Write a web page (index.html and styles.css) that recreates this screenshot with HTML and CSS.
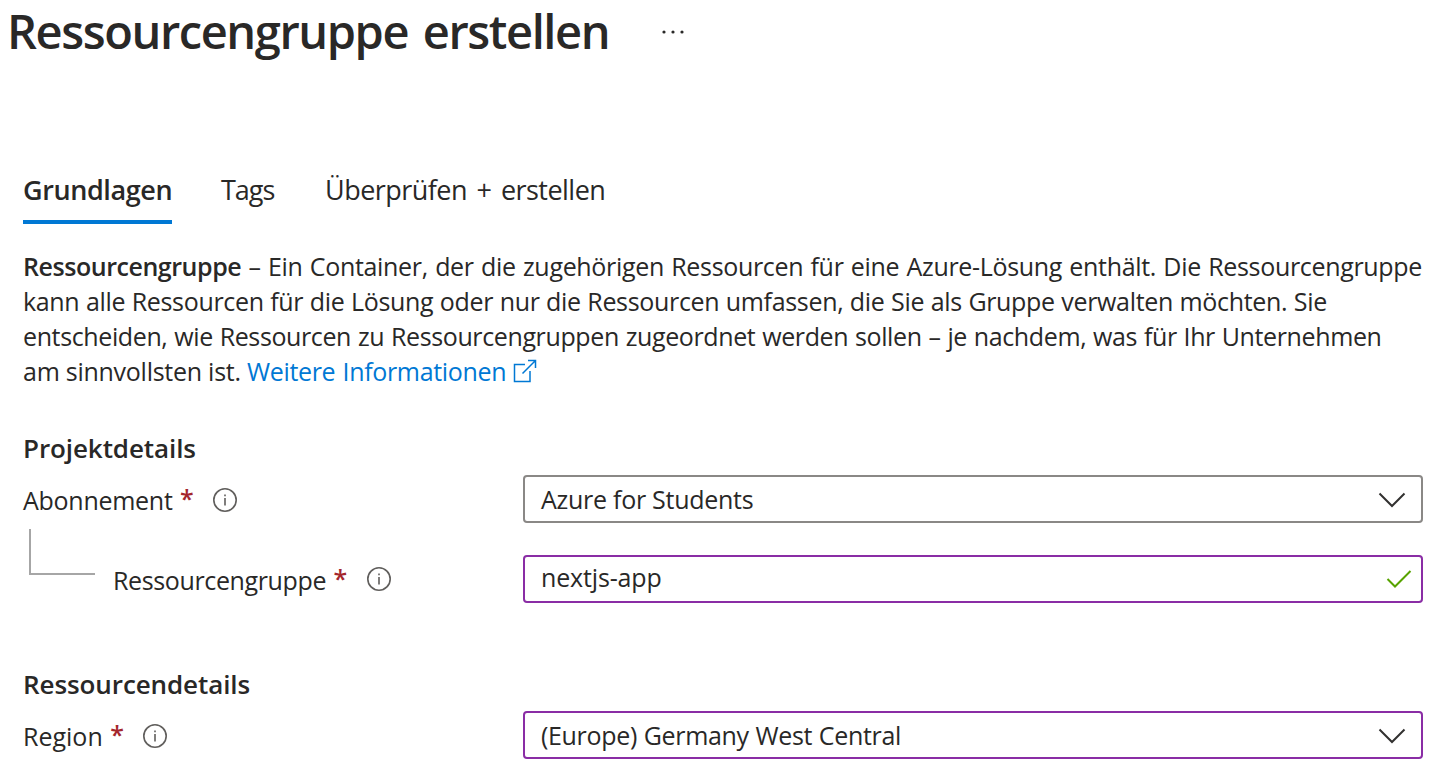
FILE: index.html
```html
<!DOCTYPE html>
<html lang="de">
<head>
<meta charset="utf-8">
<title>Ressourcengruppe erstellen</title>
<link rel="stylesheet" href="styles.css">
</head>
<body>
<header class="header">
  <h1 class="title">Ressourcengruppe erstellen</h1>
  <svg class="more" width="24" height="6" viewBox="0 0 24 6"><circle cx="3" cy="3" r="1.6"/><circle cx="12" cy="3" r="1.6"/><circle cx="21" cy="3" r="1.6"/></svg>
</header>
<nav class="tabs">
  <a class="tab tab-active">Grundlagen</a>
  <a class="tab tab-tags">Tags</a>
  <a class="tab tab-review">Überprüfen + erstellen</a>
</nav>
<main class="content">
  <p class="intro">
    <span class="line l1"><b>Ressourcengruppe</b> – Ein Container, der die zugehörigen Ressourcen für eine Azure-Lösung enthält. Die Ressourcengruppe</span>
    <span class="line l2">kann alle Ressourcen für die Lösung oder nur die Ressourcen umfassen, die Sie als Gruppe verwalten möchten. Sie</span>
    <span class="line l3">entscheiden, wie Ressourcen zu Ressourcengruppen zugeordnet werden sollen – je nachdem, was für Ihr Unternehmen</span>
    <span class="line l4">am sinnvollsten ist. <a class="link">Weitere Informationen<svg class="external" width="24" height="24" viewBox="0 0 24 24"><path d="M12 5.500H1.500V22.500H17V12M15 1.500H22.500V9M22.500 1.500L9.500 14.500"/></svg></a></span>
  </p>

  <h2 class="section">Projektdetails</h2>
  <div class="row">
    <div class="label"><span class="name n-sub">Abonnement</span><span class="star">*</span><svg class="info" width="26" height="26" viewBox="0 0 26 26"><circle cx="13" cy="13" r="11.200"/><path d="M13 11V18.500M13 7.500V9.300"/></svg></div>
    <div class="field"><span class="value v-sub">Azure for Students</span><svg class="chevron" width="28" height="16" viewBox="0 0 28 16"><path d="M1.500 1.500L14 14L26.500 1.500"/></svg></div>
  </div>
  <div class="row row-group">
    <div class="label"><span class="elbow"></span><span class="name n-group">Ressourcengruppe</span><span class="star">*</span><svg class="info info-group" width="26" height="26" viewBox="0 0 26 26"><circle cx="13" cy="13" r="11.200"/><path d="M13 11V18.500M13 7.500V9.300"/></svg></div>
    <div class="field field-edited"><span class="value v-group">nextjs-app</span><svg class="check" width="26" height="18" viewBox="0 0 26 18"><path d="M1.500 9L9 16.500L24.500 1"/></svg></div>
  </div>

  <h2 class="section section-resource">Ressourcendetails</h2>
  <div class="row">
    <div class="label"><span class="name n-region">Region</span><span class="star">*</span><svg class="info" width="26" height="26" viewBox="0 0 26 26"><circle cx="13" cy="13" r="11.200"/><path d="M13 11V18.500M13 7.500V9.300"/></svg></div>
    <div class="field field-edited"><span class="value v-region">(Europe) Germany West Central</span><svg class="chevron" width="28" height="16" viewBox="0 0 28 16"><path d="M1.500 1.500L14 14L26.500 1.500"/></svg></div>
  </div>
</main>
</body>
</html>
```
FILE: styles.css
```css
* { box-sizing: border-box; }
body {
  margin: 0;
  height: 778px;
  overflow: hidden;
  background: #fff;
  color: #292827;
  font: 25px/35px "Open Sans", "Noto Sans", sans-serif;
  letter-spacing: -0.27px;
  white-space: nowrap;
}
svg { fill: none; flex: none; }
.header { display: flex; align-items: center; height: 62px; padding-left: 7px; }
.title { margin: 0; width: 654px; font-size: 47px; line-height: 60px; font-weight: 600; letter-spacing: -1.42px; word-spacing: 4px; }
.more { margin-top: 2px; fill: #292827; }
.tabs { display: flex; height: 60px; margin-top: 102px; padding-left: 23px; font-size: 27px; line-height: 52px; }
.tab { height: 60px; }
.tab-active { width: 149px; border-bottom: 4px solid #0078d4; font-weight: 600; letter-spacing: -0.4px; }
.tab-tags { margin-left: 49px; width: 55px; letter-spacing: -1px; }
.tab-review { margin-left: 49px; letter-spacing: -0.53px; word-spacing: 3px; }
.content { padding: 25px 22px 0 23px; }
.intro { margin: 0; }
.line { display: block; }
.l1 { letter-spacing: -0.32px; word-spacing: 1.1px; }
.l2 { letter-spacing: -0.33px; word-spacing: 0.4px; }
.l3 { letter-spacing: -0.38px; word-spacing: 0.7px; }
.l4 { letter-spacing: -0.26px; }
b { font-weight: 600; letter-spacing: -0.45px; }
.link { color: #0078d4; letter-spacing: -0.33px; word-spacing: 1px; }
.external { margin-left: 7px; vertical-align: -2px; stroke: #0078d4; stroke-width: 1.5; }
.section { margin: 41px 0 0; font-size: 26px; line-height: 36px; font-weight: 600; letter-spacing: -0.09px; }
.row { display: flex; justify-content: space-between; height: 48px; margin-top: 9px; }
.row-group { margin-top: 32px; }
.label { display: flex; align-items: center; height: 51px; }
.n-group { letter-spacing: -0.37px; }
.n-region { letter-spacing: 0; }
.star { margin: -5px 0 0 7.5px; color: #a4262c; font-weight: 600; }
.info { margin: -2px 0 0 18.5px; stroke: #605e5c; stroke-width: 1.6; }
.info-group { margin-top: -4px; }
.elbow { width: 66px; height: 46px; margin: -58px 18px 0 6px; border: solid #a6a6a6; border-width: 0 0 2px 2px; }
.field { display: flex; align-items: center; justify-content: space-between; width: 900px; height: 48px; padding: 0 15px 0 16px; border: 2px solid #8a8886; border-radius: 4px; }
.field-edited { border-color: #8a2da5; }
.v-group { margin-top: -3px; letter-spacing: -0.15px; }
.v-region { letter-spacing: -0.33px; word-spacing: 0.6px; }
.chevron { margin-top: 2px; stroke: #323130; stroke-width: 2; }
.check { margin-right: -6px; stroke: #57a300; stroke-width: 2; }
.section-resource { margin-top: 63px; }
```
